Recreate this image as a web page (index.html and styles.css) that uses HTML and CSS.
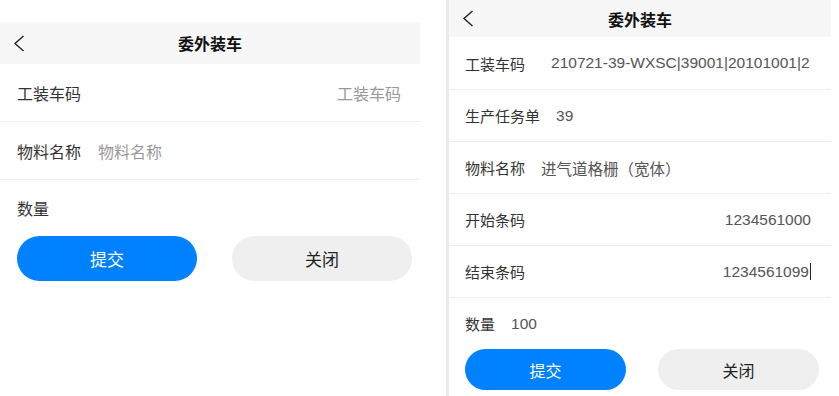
FILE: index.html
```html
<!DOCTYPE html>
<html lang="zh-CN">
<head>
    <meta charset="UTF-8">
    <meta name="viewport" content="width=device-width, initial-scale=1.0">
    <title>委外装车</title>
    <link rel="stylesheet" href="styles.css">
</head>
<body>
    <!-- 空表单 -->
    <div class="page page-empty">
        <div class="nav">
            <span class="back">
                <svg width="12" height="17" viewBox="0 0 12 17"><path d="M10.5 1 L2 8.5 L10.5 16" fill="none" stroke="#222" stroke-width="1.4"/></svg>
            </span>
            <span class="title">委外装车</span>
        </div>
        <div class="cell">
            <span class="label">工装车码</span>
            <span class="value placeholder right">工装车码</span>
        </div>
        <div class="cell">
            <span class="label">物料名称</span>
            <span class="value placeholder">物料名称</span>
        </div>
        <div class="cell last">
            <span class="label">数量</span>
        </div>
        <div class="btns">
            <div class="btn btn-primary">提交</div>
            <div class="btn btn-default">关闭</div>
        </div>
    </div>

    <!-- 已扫描 -->
    <div class="page page-filled">
        <div class="nav">
            <span class="back">
                <svg width="12" height="17" viewBox="0 0 12 17"><path d="M10.5 1 L2 8.5 L10.5 16" fill="none" stroke="#222" stroke-width="1.4"/></svg>
            </span>
            <span class="title">委外装车</span>
        </div>
        <div class="cell first">
            <span class="label">工装车码</span>
            <span class="value wide">210721-39-WXSC|39001|20101001|2</span>
        </div>
        <div class="cell">
            <span class="label">生产任务单</span>
            <span class="value">39</span>
        </div>
        <div class="cell">
            <span class="label">物料名称</span>
            <span class="value">进气道格栅（宽体）</span>
        </div>
        <div class="cell">
            <span class="label">开始条码</span>
            <span class="value right">1234561000</span>
        </div>
        <div class="cell">
            <span class="label">结束条码</span>
            <span class="value right"><span class="caret">1234561099</span></span>
        </div>
        <div class="cell last">
            <span class="label">数量</span>
            <span class="value">100</span>
        </div>
        <div class="btns">
            <div class="btn btn-primary">提交</div>
            <div class="btn btn-default">关闭</div>
        </div>
    </div>
</body>
</html>
```

FILE: styles.css
```css
*{
    box-sizing: border-box;
}
body{
    margin: 0;
    display: flex;
    font-family: "Liberation Sans", "Noto Sans CJK SC", sans-serif;
    color: #333;
    background: #fff;
}
.page{
    display: flex;
    flex-direction: column;
}
.nav{
    display: flex;
    align-items: center;
    position: relative;
    background: #f7f7f7;
}
.nav .back{
    display: flex;
}
.nav .title{
    position: absolute;
    left: 0;
    right: 0;
    text-align: center;
    font-weight: bold;
    font-size: 16px;
    color: #111;
}
.cell{
    display: flex;
    align-items: center;
    border-bottom: 1px solid #eeeeee;
}
.cell.last{
    border-bottom: none;
}
.cell .value{
    color: #555;
}
.cell .placeholder{
    color: #999;
}
.cell .right{
    margin-left: auto;
}
.btns{
    display: flex;
}
.btn{
    display: flex;
    align-items: center;
    justify-content: center;
    border-radius: 999px;
    font-family: "Noto Sans CJK SC", sans-serif;
}
.btn-primary{
    background: #0081ff;
    color: #fff;
}
.btn-default{
    background: #efefef;
    color: #222;
}

/* 左边 空表单 */
.page-empty{
    width: 420px;
    padding-top: 22px;
}
.page-empty .nav{
    height: 42px;
    padding-left: 13px;
}
.page-empty .cell{
    height: 58px;
    padding: 0 19px 0 17px;
    font-size: 16px;
}
.page-empty .cell .value{
    margin-left: 17px;
}
.page-empty .cell .right{
    margin-left: auto;
}
.page-empty .cell.last{
    height: 56px;
}
.page-empty .btns{
    padding-left: 17px;
    gap: 35px;
}
.page-empty .btn{
    width: 180px;
    height: 45px;
    font-size: 17px;
}

/* 右边 已填写 */
.page-filled{
    margin-left: 26px;
    width: 385px;
    height: 396px;
    border-left: 3px solid #ebebeb;
}
.page-filled .nav{
    height: 37px;
    padding-left: 13px;
}
.page-filled .cell{
    height: 52px;
    padding: 0 20px 0 16px;
    font-size: 15px;
}
.page-filled .cell.first{
    height: 53px;
}
.page-filled .cell .value{
    margin-left: 16px;
    font-size: 15.5px;
}
.page-filled .cell .wide{
    margin-left: 26px;
}
.page-filled .cell .right{
    margin-left: auto;
}
.page-filled .cell.last{
    height: 51px;
}
.page-filled .btns{
    padding-left: 16px;
    gap: 32px;
}
.page-filled .btn{
    width: 161px;
    height: 41px;
    font-size: 16px;
}
.caret{
    border-right: 1px solid #222;
    padding-right: 1px;
}
```
